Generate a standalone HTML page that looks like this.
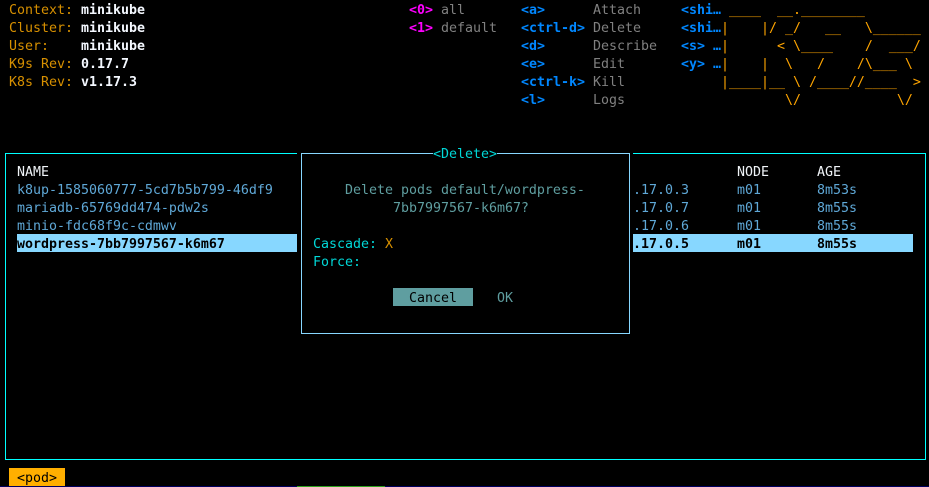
<!DOCTYPE html>
<html>
<head>
<meta charset="utf-8">
<style>
html,body{margin:0;padding:0;background:#000;width:929px;height:487px;overflow:hidden}
#t{position:relative;width:929px;height:487px;overflow:hidden;background:#000;font-family:"DejaVu Sans Mono",monospace;font-size:13.29px;line-height:22px}
#t div{position:absolute;white-space:pre}
.o{color:#d79000}
.w{color:#f4f8ff;font-weight:bold}
.m{color:#ff00ff;font-weight:bold}
.k{color:#0087ff;font-weight:bold}
.g{color:#808080}
.l{color:#ffa500}
.h{color:#f0f4f8}
.r{color:#5fa8d7}
.s{color:#000;font-weight:bold}
.c{color:#5f9ea0}
.a{color:#00d7d7}
</style>
</head>
<body>
<div id="t">
<div class="o" style="left:9px;top:0">Context:</div><div class="w" style="left:81px;top:0">minikube</div>
<div class="o" style="left:9px;top:18px">Cluster:</div><div class="w" style="left:81px;top:18px">minikube</div>
<div class="o" style="left:9px;top:36px">User:</div><div class="w" style="left:81px;top:36px">minikube</div>
<div class="o" style="left:9px;top:54px">K9s Rev:</div><div class="w" style="left:81px;top:54px">0.17.7</div>
<div class="o" style="left:9px;top:72px">K8s Rev:</div><div class="w" style="left:81px;top:72px">v1.17.3</div>

<div class="m" style="left:409px;top:0">&lt;0&gt;</div><div class="g" style="left:441px;top:0">all</div>
<div class="m" style="left:409px;top:18px">&lt;1&gt;</div><div class="g" style="left:441px;top:18px">default</div>

<div class="k" style="left:521px;top:0">&lt;a&gt;</div><div class="g" style="left:593px;top:0">Attach</div>
<div class="k" style="left:521px;top:18px">&lt;ctrl-d&gt;</div><div class="g" style="left:593px;top:18px">Delete</div>
<div class="k" style="left:521px;top:36px">&lt;d&gt;</div><div class="g" style="left:593px;top:36px">Describe</div>
<div class="k" style="left:521px;top:54px">&lt;e&gt;</div><div class="g" style="left:593px;top:54px">Edit</div>
<div class="k" style="left:521px;top:72px">&lt;ctrl-k&gt;</div><div class="g" style="left:593px;top:72px">Kill</div>
<div class="k" style="left:521px;top:90px">&lt;l&gt;</div><div class="g" style="left:593px;top:90px">Logs</div>

<div class="k" style="left:681px;top:0">&lt;shi…</div>
<div class="k" style="left:681px;top:18px">&lt;shi…</div>
<div class="k" style="left:681px;top:36px">&lt;s&gt; …</div>
<div class="k" style="left:681px;top:54px">&lt;y&gt; …</div>

<div class="l" style="left:721px;top:0"> ____  __.________</div>
<div class="l" style="left:721px;top:18px">|    |/ _/   __   \______</div>
<div class="l" style="left:721px;top:36px">|      &lt; \____    /  ___/</div>
<div class="l" style="left:721px;top:54px">|    |  \   /    /\___ \</div>
<div class="l" style="left:721px;top:72px">|____|__ \ /____//____  &gt;</div>
<div class="l" style="left:721px;top:90px">        \/            \/</div>

<!-- outer frame -->
<div style="left:5px;top:153px;width:292px;height:1px;background:#00ffff"></div>
<div style="left:633px;top:153px;width:293px;height:1px;background:#00ffff"></div>
<div style="left:5px;top:459px;width:921px;height:1px;background:#00ffff"></div>
<div style="left:5px;top:153px;width:1px;height:307px;background:#00ffff"></div>
<div style="left:925px;top:153px;width:1px;height:307px;background:#00ffff"></div>

<!-- table -->
<div class="h" style="left:17px;top:162px">NAME</div>
<div class="h" style="left:737px;top:162px">NODE</div>
<div class="h" style="left:817px;top:162px">AGE</div>

<div class="r" style="left:17px;top:180px">k8up-1585060777-5cd7b5b799-46df9</div>
<div class="r" style="left:633px;top:180px">.17.0.3</div>
<div class="r" style="left:737px;top:180px">m01</div>
<div class="r" style="left:817px;top:180px">8m53s</div>

<div class="r" style="left:17px;top:198px">mariadb-65769dd474-pdw2s</div>
<div class="r" style="left:633px;top:198px">.17.0.7</div>
<div class="r" style="left:737px;top:198px">m01</div>
<div class="r" style="left:817px;top:198px">8m55s</div>

<div class="r" style="left:17px;top:216px">minio-fdc68f9c-cdmwv</div>
<div class="r" style="left:633px;top:216px">.17.0.6</div>
<div class="r" style="left:737px;top:216px">m01</div>
<div class="r" style="left:817px;top:216px">8m55s</div>

<div style="left:17px;top:234px;width:280px;height:18px;background:#87d7ff"></div>
<div style="left:633px;top:234px;width:280px;height:18px;background:#87d7ff"></div>
<div class="s" style="left:17px;top:234px">wordpress-7bb7997567-k6m67</div>
<div class="s" style="left:633px;top:234px">.17.0.5</div>
<div class="s" style="left:737px;top:234px">m01</div>
<div class="s" style="left:817px;top:234px">8m55s</div>

<!-- dialog -->
<div style="left:301px;top:153px;width:132px;height:1px;background:#87d7ff"></div>
<div style="left:497px;top:153px;width:133px;height:1px;background:#87d7ff"></div>
<div style="left:301px;top:333px;width:329px;height:1px;background:#87d7ff"></div>
<div style="left:301px;top:153px;width:1px;height:181px;background:#87d7ff"></div>
<div style="left:629px;top:153px;width:1px;height:181px;background:#87d7ff"></div>
<div class="a" style="left:433px;top:144px">&lt;Delete&gt;</div>
<div class="c" style="left:345px;top:180px">Delete pods default/wordpress-</div>
<div class="c" style="left:393px;top:198px">7bb7997567-k6m67?</div>
<div class="a" style="left:313px;top:234px">Cascade:</div>
<div class="o" style="left:385px;top:234px">X</div>
<div class="a" style="left:313px;top:252px">Force:</div>
<div style="left:393px;top:288px;width:80px;height:18px;background:#5f9ea0"></div>
<div style="left:409px;top:288px;color:#000">Cancel</div>
<div class="c" style="left:497px;top:288px">OK</div>

<!-- footer -->
<div style="left:9px;top:468px;width:56px;height:18px;background:#ffaf00"></div>
<div style="left:17px;top:468px;color:#000">&lt;pod&gt;</div>
<div style="left:0;top:486px;width:929px;height:1px;background:#00005f"></div>
<div style="left:297px;top:486px;width:88px;height:1px;background:#2da01e"></div>
</div>
</body>
</html>
